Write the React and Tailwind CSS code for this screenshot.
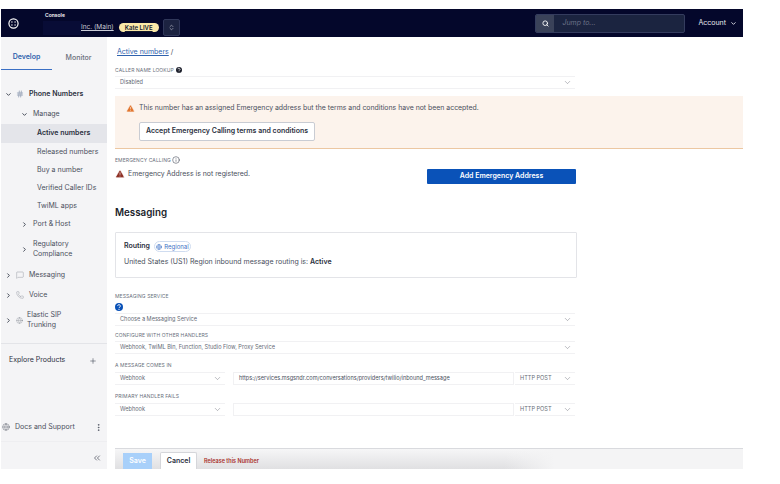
import React from "react";
import { ChevronDown, ChevronRight, ChevronsUpDown, ChevronsLeft, Search, Plus, EllipsisVertical, Hash, MessageSquare, Phone, Globe, Info, TriangleAlert } from "lucide-react";

const Logo = () => (
  <svg width="11" height="11" viewBox="0 0 24 24" fill="none" stroke="#fff" strokeWidth="2.6">
    <circle cx="12" cy="12" r="10" />
    <circle cx="8.6" cy="8.6" r="1.5" fill="#fff" stroke="none" />
    <circle cx="15.4" cy="8.6" r="1.5" fill="#fff" stroke="none" />
    <circle cx="8.6" cy="15.4" r="1.5" fill="#fff" stroke="none" />
    <circle cx="15.4" cy="15.4" r="1.5" fill="#fff" stroke="none" />
  </svg>
);

const HelpDot = ({ color, size, className = "" }) => (
  <svg className={className} width={size} height={size} viewBox="0 0 24 24">
    <circle cx="12" cy="12" r="12" fill={color} />
    <path d="M8 9a4 4 0 1 1 6 3.5c-1.4.8-2 1.5-2 3" fill="none" stroke="#fff" strokeWidth="3" />
    <circle cx="12" cy="19.5" r="1.8" fill="#fff" />
  </svg>
);

const Row = ({ h, pl, children, cls = "" }) => (
  <div className={`flex items-center text-[7px] text-[#4a4f5c] ${cls}`} style={{ height: h, paddingLeft: pl }}>{children}</div>
);

const Caret = ({ down }) => down
  ? <ChevronDown size={7} strokeWidth={3} className="text-[#333a48]" />
  : <ChevronRight size={7} strokeWidth={3} className="text-[#333a48]" />;

const Label = ({ children, cls = "" }) => (
  <div className={`text-[5px] leading-[7px] tracking-[0.1px] text-[#6a6f7b] uppercase ${cls}`}>{children}</div>
);

const Field = ({ children, cls = "", chevron = true }) => (
  <div className={`h-[13px] flex items-center justify-between pl-[5px] pr-[3px] border border-[#f1f1f3] text-[5.6px] text-[#666b76] ${cls}`}>
    <span className="whitespace-nowrap">{children}</span>
    {chevron && <ChevronDown size={9} strokeWidth={1} className="text-[#4a4f5c]" />}
  </div>
);

export default function App() {
  return (
    <div className="w-[780px] h-[484px] bg-white pt-[9px] overflow-hidden" style={{ fontFamily: "Inter, sans-serif" }}>
      <div className="w-[742px] ml-[1px] h-[460px] flex flex-col">
        <header className="h-[28px] bg-[#04072b] flex items-center shrink-0 text-white">
          <div className="w-[26px] flex justify-center shrink-0 -ml-[1px]"><Logo /></div>
          <div className="w-[17px] shrink-0" />
          <div className="relative flex items-center h-full pt-[9px]">
            <span className="absolute top-[3px] left-[2px] text-[5px] font-semibold text-white">Console</span>
            <div className="w-[38px] h-[14px] bg-[#080c36] shrink-0" />
            <span className="text-[6.5px] underline text-[#c9cbd6] whitespace-nowrap">Inc. (Main)</span>
            <span className="ml-[5px] h-[9px] w-[40px] rounded-full bg-[#fbe9a8] text-[#14182f] text-[6px] font-semibold underline flex items-center justify-center">Kate LIVE</span>
            <span className="ml-[4px] w-[17px] h-[17px] rounded-[2px] bg-[#1c2341] border border-[#30375a] flex items-center justify-center"><ChevronsUpDown size={7} className="text-[#c9cbd6]" /></span>
          </div>
          <div className="ml-auto flex items-center">
            <div className="w-[150px] h-[19px] flex rounded-[2px] border border-[#343c5e] bg-[#1b2440] overflow-hidden">
              <span className="w-[18px] bg-[#3a4259] flex items-center justify-center"><Search size={7} strokeWidth={3} className="text-white" /></span>
              <span className="pl-[8px] text-[7px] italic text-[#6b7288] flex items-center">Jump to...</span>
            </div>
            <span className="ml-[13px] text-[7px] text-[#e6e7ee]">Account</span>
            <ChevronDown size={7} strokeWidth={3} className="ml-[4px] mr-[6px] text-[#e6e7ee]" />
          </div>
        </header>
        <div className="flex-1 flex min-h-0">
          <aside className="w-[106px] bg-[#f4f4f6] flex flex-col shrink-0">
            <div className="flex h-[33px] mb-[14px] text-[7px] font-semibold">
              <div className="w-[51px] border-b border-[#3a6fc4] text-[#2f62ad] flex items-center justify-center pt-[9px]">Develop</div>
              <div className="flex-1 pr-[2px] text-[#6a6f7b] font-medium flex items-center justify-center pt-[9px]">Monitor</div>
            </div>
            <Row h={20} pl={4}><Caret down /><Hash size={8} className="ml-[4px] text-[#7f8ea8]" /><span className="ml-[5px] font-semibold text-[#2b3040]">Phone Numbers</span></Row>
            <Row h={20} pl={20}><Caret down /><span className="ml-[5px]">Manage</span></Row>
            <Row h={19} pl={36} cls="bg-[#e4e5ea] font-semibold !text-[#2b3040]">Active numbers</Row>
            <Row h={18} pl={36}>Released numbers</Row>
            <Row h={18} pl={36}>Buy a number</Row>
            <Row h={18} pl={36}>Verified Caller IDs</Row>
            <Row h={18} pl={36}>TwiML apps</Row>
            <Row h={18} pl={20}><Caret /><span className="ml-[5px]">Port &amp; Host</span></Row>
            <Row h={32} pl={20}><Caret /><span className="ml-[5px] leading-[10px]">Regulatory<br />Compliance</span></Row>
            <Row h={20} pl={4}><Caret /><MessageSquare size={8} strokeWidth={1} className="ml-[4px] text-[#6a6f7b]" /><span className="ml-[5px]">Messaging</span></Row>
            <Row h={20} pl={4}><Caret /><Phone size={8} strokeWidth={1} className="ml-[4px] text-[#6a6f7b]" /><span className="ml-[5px]">Voice</span></Row>
            <Row h={30} pl={4} cls="mb-[8px]"><Caret /><Globe size={7} strokeWidth={1} className="ml-[4px] text-[#6a6f7b]" /><span className="ml-[4px] leading-[10px]">Elastic SIP<br />Trunking</span></Row>
            <div className="border-t border-[#e3e4e8] h-[34px] flex items-center justify-between pl-[8px] pr-[10px] text-[7px] text-[#2b3040]">
              <span>Explore Products</span>
              <Plus size={8} strokeWidth={1.5} />
            </div>
            <div className="mt-[40px] h-[20px] flex items-center pl-[1px] pr-[4px] text-[7px] text-[#4a4f5c]">
              <Globe size={8} strokeWidth={1.2} />
              <span className="ml-[5px]">Docs and Support</span>
              <EllipsisVertical size={9} className="ml-auto" />
            </div>
            <div className="mt-auto h-[28px] border-t border-[#eeeef1] flex items-center justify-end pr-[5px] pt-[4px]">
              <ChevronsLeft size={10} strokeWidth={1.5} className="text-[#2b3040]" />
            </div>
          </aside>
          <main className="flex-1 flex flex-col min-w-0 pl-[8px]">
            <div className="pt-[10px] pl-[2px] h-[27px] text-[7px] text-[#4a4f5c]"><span className="text-[#2f62ad] underline">Active numbers</span> /</div>
            <Label cls="flex items-center gap-[2px] h-[12px]">Caller name lookup<HelpDot color="#1b1e2a" size={6} /></Label>
            <Field cls="w-[460px] border-x-0">Disabled</Field>
            <div className="mt-[7px] h-[53px] bg-[#fcf3ec] border-b border-[#ecc7a2] pl-[11px] pt-[6px]">
              <div className="flex items-center text-[6.9px] text-[#4a4f5c] h-[13px]">
                <TriangleAlert size={9} fill="#e2762f" stroke="#fcf3ec" strokeWidth={1.5} className="mr-[4px]" />
                This number has an assigned Emergency address but the terms and conditions have not been accepted.
              </div>
              <div className="ml-[13px] mt-[7px] w-[176px] h-[19px] bg-white border border-[#c9ccd3] rounded-[2px] flex items-center justify-center text-[7px] font-semibold text-[#2b3040] whitespace-nowrap">
                Accept Emergency Calling terms and conditions
              </div>
            </div>
            <Label cls="mt-[7px] flex items-center gap-[1px] h-[8px]">Emergency Calling<Info size={8} strokeWidth={1.5} className="text-[#2b3040]" /></Label>
            <div className="flex items-start justify-between w-[461px] h-[16px] mt-[3px]">
              <div className="flex items-center text-[6.9px] text-[#4a4f5c] h-[12px] mt-[1px]">
                <TriangleAlert size={10} fill="#8f3227" stroke="#fff" strokeWidth={1.5} className="mr-[3px]" />
                Emergency Address is not registered.
              </div>
              <div className="w-[149px] h-[15px] bg-[#0a52b8] rounded-[1px] mt-[2px] flex items-center justify-center text-[7px] font-semibold text-white">Add Emergency Address</div>
            </div>
            <h2 className="mt-[23px] text-[9.8px] leading-[14px] font-semibold text-[#1b1e2a]">Messaging</h2>
            <div className="mt-[12px] w-[462px] h-[46px] border border-[#e3e4e8] rounded-[1px] pl-[8px] pt-[8px]">
              <div className="flex items-center h-[11px] text-[7px] font-semibold text-[#2b3040]">
                Routing
                <span className="ml-[4px] h-[11px] w-[37px] rounded-full border border-[#cfdcf0] text-[#3a6fc4] font-normal text-[6px] flex items-center justify-center gap-[2px]"><Globe size={6} />Regional</span>
              </div>
              <div className="mt-[5px] text-[7px] leading-[10px] text-[#4a4f5c]">United States (US1) Region inbound message routing is: <b className="font-semibold text-[#2b3040]">Active</b></div>
            </div>
            <Label cls="mt-[15px]">Messaging Service</Label>
            <HelpDot color="#0a52b8" size={8} className="mt-[3px] shrink-0" />
            <Field cls="w-[460px] border-x-0 mt-[2px] shrink-0">Choose a Messaging Service</Field>
            <Label cls="mt-[6px]">Configure with other handlers</Label>
            <Field cls="w-[460px] border-x-0 mt-[2px] shrink-0">Webhook, TwiML Bin, Function, Studio Flow, Proxy Service</Field>
            <Label cls="mt-[8px]">A message comes in</Label>
            <div className="flex w-[460px] mt-[3px] gap-[8px]">
              <Field cls="w-[110px] border-x-0 shrink-0">Webhook</Field>
              <Field cls="w-[281px] shrink-0 !text-[#4a4f5c]" chevron={false}>https://services.msgsndr.com/conversations/providers/twilio/inbound_message</Field>
              <Field cls="flex-1 -ml-[7px] border-x-0">HTTP POST</Field>
            </div>
            <Label cls="mt-[8px]">Primary handler fails</Label>
            <div className="flex w-[460px] mt-[3px] gap-[8px]">
              <Field cls="w-[110px] border-x-0 shrink-0">Webhook</Field>
              <Field cls="w-[281px] shrink-0" chevron={false}></Field>
              <Field cls="flex-1 -ml-[7px] border-x-0">HTTP POST</Field>
            </div>
            <div className="mt-auto h-[21px] border-t border-[#d9dade] bg-[linear-gradient(to_right,transparent_62%,#f4f4f5_70%),linear-gradient(to_bottom,#f6f6f7,#e0e0e2)] flex items-end pl-[8px] overflow-hidden text-[7px]">
              <div className="w-[29px] h-[16px] bg-[#a8d0fa] text-white font-semibold flex items-center justify-center">Save</div>
              <div className="ml-[8px] w-[37px] h-[17px] bg-white border border-b-0 border-[#d5d6da] rounded-t-[2px] text-[#2b3040] font-semibold flex items-center justify-center">Cancel</div>
              <div className="ml-[7px] h-[16px] flex items-center text-[5.5px] font-semibold text-[#a8302a]">Release this Number</div>
            </div>
          </main>
        </div>
      </div>
    </div>
  );
}
